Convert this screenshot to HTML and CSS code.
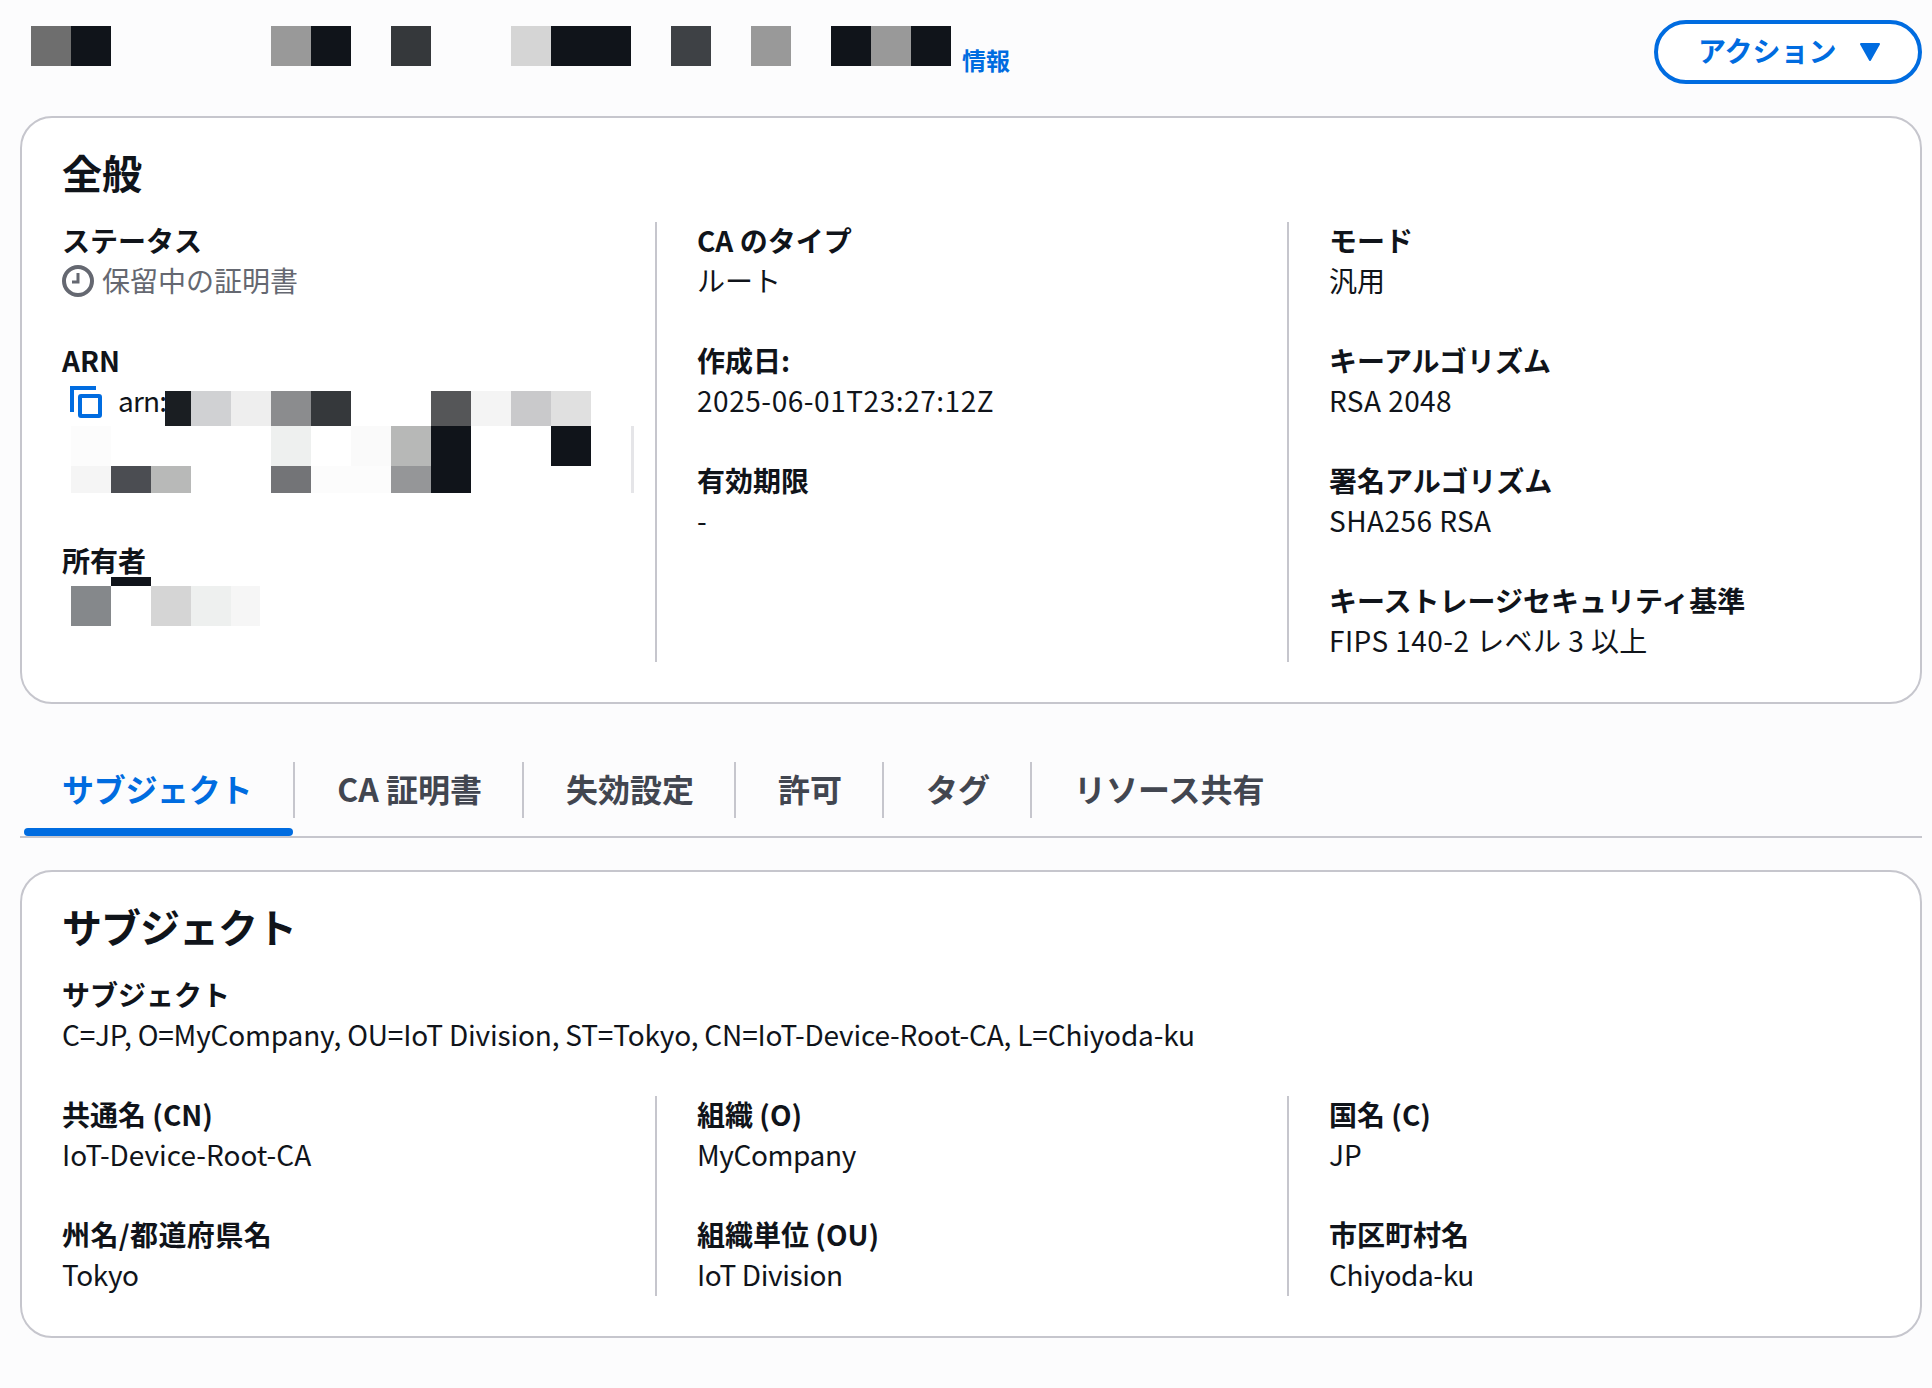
FILE: index.html
```html
<!DOCTYPE html>
<html lang="ja">
<head>
<meta charset="utf-8">
<title>CA 詳細</title>
<link rel="stylesheet" href="styles.css">
</head>
<body>
<header class="page-head">
  <div class="title-wrap">
    <div class="cells title-cells">
      <i class="cell s-6e"></i><i class="cell s-10"></i><i class="cell"></i><i class="cell"></i><i class="cell"></i><i class="cell"></i>
      <i class="cell s-99"></i><i class="cell s-10"></i><i class="cell"></i><i class="cell s-35"></i><i class="cell"></i><i class="cell"></i>
      <i class="cell s-d5"></i><i class="cell s-10"></i><i class="cell s-10"></i><i class="cell"></i><i class="cell s-3e"></i><i class="cell"></i>
      <i class="cell s-99"></i><i class="cell"></i><i class="cell s-10"></i><i class="cell s-99"></i><i class="cell s-10"></i>
    </div>
    <a class="info" href="#">情報</a>
  </div>
  <button class="action" type="button"><span>アクション</span>
    <svg class="caret" width="20" height="18" viewBox="0 0 20 18"><path d="M1 1h18L10 17z" fill="#006ce0" stroke="#006ce0" stroke-width="2" stroke-linejoin="round"/></svg>
  </button>
</header>

<section class="card general">
  <h2>全般</h2>
  <div class="cols">
    <div class="col">
      <div class="item">
        <div class="label">ステータス</div>
        <div class="value status">
          <svg class="status-icon" width="32" height="32" viewBox="0 0 32 32"><circle cx="16" cy="16" r="14" fill="none" stroke="#656871" stroke-width="4"/><path d="M16 8v9h-6" fill="none" stroke="#656871" stroke-width="3"/></svg>
          保留中の証明書
        </div>
      </div>
      <div class="item">
        <div class="label">ARN</div>
        <div class="value arn">
          <svg class="copy-icon" width="32" height="32" viewBox="0 0 32 32"><path d="M2 26V2h24" fill="none" stroke="#006ce0" stroke-width="4"/><rect x="10" y="10" width="20" height="20" rx="1" fill="none" stroke="#006ce0" stroke-width="4"/></svg>
          <span class="arn-text">arn:</span>
          <div class="arn-mask">
            <div class="cells r1">
              <i class="gap-94"></i><i class="cell narrow s-1a"></i><i class="cell s-d0"></i><i class="cell s-ee"></i><i class="cell s-8b"></i><i class="cell s-35"></i><i class="cell s-w"></i><i class="cell s-w"></i><i class="cell s-55"></i><i class="cell s-f4"></i><i class="cell s-c9"></i><i class="cell s-e0"></i>
            </div>
            <div class="cells r2">
              <i class="cell s-fc"></i><i class="cell s-w"></i><i class="cell s-w"></i><i class="cell s-w"></i><i class="cell s-w"></i><i class="cell s-ef"></i><i class="cell s-w"></i><i class="cell s-fa"></i><i class="cell s-b7"></i><i class="cell s-10"></i><i class="cell s-w"></i><i class="cell s-w"></i><i class="cell s-10"></i><i class="cell s-w"></i><i class="edge"></i>
            </div>
            <div class="cells r3">
              <i class="cell s-f5"></i><i class="cell s-4b"></i><i class="cell s-b8"></i><i class="cell s-w"></i><i class="cell s-w"></i><i class="cell s-73"></i><i class="cell s-fc"></i><i class="cell s-fc"></i><i class="cell s-95"></i><i class="cell s-10"></i><i class="cell s-w"></i><i class="cell s-w"></i><i class="cell s-w"></i><i class="cell s-w"></i><i class="edge"></i>
            </div>
          </div>
        </div>
      </div>
      <div class="item owner">
        <div class="label">所有者</div>
        <div class="value">&nbsp;
          <div class="owner-mask">
            <i class="owner-bar"></i>
            <div class="cells r-owner">
              <i class="cell s-85"></i><i class="cell s-w"></i><i class="cell s-d5"></i><i class="cell s-ef"></i><i class="cell short s-f6"></i>
            </div>
          </div>
        </div>
      </div>
    </div>
    <div class="col ruled">
      <div class="item"><div class="label">CA のタイプ</div><div class="value">ルート</div></div>
      <div class="item"><div class="label">作成日:</div><div class="value num-wide">2025-06-01T23:27:12Z</div></div>
      <div class="item"><div class="label">有効期限</div><div class="value">-</div></div>
    </div>
    <div class="col ruled">
      <div class="item"><div class="label">モード</div><div class="value">汎用</div></div>
      <div class="item"><div class="label">キーアルゴリズム</div><div class="value num">RSA 2048</div></div>
      <div class="item"><div class="label">署名アルゴリズム</div><div class="value num">SHA256 RSA</div></div>
      <div class="item"><div class="label">キーストレージセキュリティ基準</div><div class="value num">FIPS 140-2 レベル 3 以上</div></div>
    </div>
  </div>
</section>

<nav class="tabs">
  <a class="tab active" href="#">サブジェクト</a>
  <a class="tab" href="#">CA 証明書</a>
  <a class="tab" href="#">失効設定</a>
  <a class="tab" href="#">許可</a>
  <a class="tab" href="#">タグ</a>
  <a class="tab" href="#">リソース共有</a>
</nav>

<section class="card subject">
  <h2 class="tight">サブジェクト</h2>
  <div class="item full">
    <div class="label">サブジェクト</div>
    <div class="value long">C=JP, O=MyCompany, OU=IoT Division, ST=Tokyo, CN=IoT-Device-Root-CA, L=Chiyoda-ku</div>
  </div>
  <div class="cols">
    <div class="col">
      <div class="item"><div class="label">共通名 (CN)</div><div class="value">IoT-Device-Root-CA</div></div>
      <div class="item"><div class="label wide">州名/都道府県名</div><div class="value lower">Tokyo</div></div>
    </div>
    <div class="col ruled">
      <div class="item"><div class="label">組織 (O)</div><div class="value lower">MyCompany</div></div>
      <div class="item"><div class="label">組織単位 (OU)</div><div class="value lower">IoT Division</div></div>
    </div>
    <div class="col ruled">
      <div class="item"><div class="label">国名 (C)</div><div class="value">JP</div></div>
      <div class="item"><div class="label">市区町村名</div><div class="value lower">Chiyoda-ku</div></div>
    </div>
  </div>
</section>
</body>
</html>
```
FILE: styles.css
```css
* { box-sizing: border-box; }
html, body { margin: 0; background: #fcfcfd; }
body {
  padding: 20px 10px 0 20px;
  font-family: "Noto Sans CJK JP", "Noto Sans", sans-serif;
  font-size: 28px;
  line-height: 40px;
  color: #10141a;
}
i { display: block; }

.page-head { display: flex; justify-content: space-between; align-items: flex-start; height: 96px; }
.title-wrap { display: flex; align-items: flex-end; padding: 6px 0 0 11px; }
.cells { display: flex; }
.cell { width: 40px; height: 100%; flex: none; }
.title-cells { height: 40px; }
.info { font-size: 24px; line-height: 34px; color: #006ce0; text-decoration: none; font-weight: 600; margin: 0 0 -11px 11px; }
.action {
  display: flex; align-items: center; justify-content: space-between;
  width: 268px; height: 64px; padding: 0 38px 4px 40px;
  border: 4px solid #006ce0; border-radius: 40px; background: #fff;
  color: #006ce0; font: 700 28px/40px "Noto Sans CJK JP", "Noto Sans", sans-serif;
  white-space: nowrap;
}
.caret { flex: none; margin-top: 3px; }

.card { background: #fff; border: 2px solid #c6c6cd; border-radius: 32px; padding: 32px 40px 40px; }
.general { height: 588px; }
.subject { height: 468px; margin-top: 32px; }
h2 { margin: -2px 0 24px; font-size: 40px; line-height: 48px; font-weight: 700; }
.tight { letter-spacing: -1px; }

.cols { display: grid; grid-template-columns: 593px 632px 1fr; }
.col { display: flex; flex-direction: column; gap: 40px; }
.ruled { position: relative; padding-left: 42px; }
.ruled::before { content: ""; position: absolute; left: 0; top: 2px; bottom: -2px; width: 2px; background: #c6c6cd; }
.label { font-weight: 700; }
.wide { letter-spacing: 0.4px; }
.full { margin-bottom: 40px; }
.num { letter-spacing: 0.45px; }
.num-wide { letter-spacing: 0.55px; }
.lower { letter-spacing: -0.4px; }
.long { letter-spacing: -0.17px; }

.status { display: flex; align-items: center; gap: 8px; color: #656871; }
.status-icon { flex: none; margin-top: 2px; }

.arn { position: relative; display: flex; align-items: center; padding-left: 8px; gap: 16px; width: 100%; height: 40px; margin-bottom: 80px; }
.arn-text { letter-spacing: -0.8px; }
.copy-icon { flex: none; margin-top: 4px; }
.arn-mask { position: absolute; left: 9px; top: 11px; width: 563px; }
.r1 { height: 35px; }
.r2 { height: 40px; background: #fff; }
.r3 { height: 27px; background: #fff; }
.gap-94 { width: 94px; flex: none; }
.narrow { width: 26px; }
.edge { width: 3px; background: #e5e5e8; flex: none; }

.owner .value { position: relative; }
.owner-mask { position: absolute; left: 9px; top: -3px; }
.owner-bar { width: 40px; height: 9px; margin-left: 40px; background: #10141a; }
.r-owner { height: 40px; }
.short { width: 29px; }

.tabs { display: flex; height: 134px; padding: 58px 0 0 2px; position: relative; }
.tabs::after { content: ""; position: absolute; left: 0; right: 0; top: 132px; height: 2px; background: #c6c6cd; }
.tab { position: relative; height: 56px; padding: 0 40px 0 42px; font-size: 32px; line-height: 52px; font-weight: 700; color: #424650; text-decoration: none; white-space: nowrap; border-right: 2px solid #c6c6cd; }
.tab:first-child { padding-left: 40px; padding-right: 41px; letter-spacing: -0.3px; }
.tab:last-child { border-right: 0; }
.tab.active { color: #006ce0; }
.tab.active::after { content: ""; position: absolute; left: 2px; right: 0; top: 66px; height: 8px; border-radius: 4px; background: #006ce0; }

.s-w { background: #fff; }
.s-10 { background: #10141a; }
.s-1a { background: #1a1e22; }
.s-35 { background: #35383b; }
.s-3e { background: #3e4145; }
.s-4b { background: #4b4d52; }
.s-55 { background: #555658; }
.s-6e { background: #6e6e6e; }
.s-73 { background: #737477; }
.s-85 { background: #85888b; }
.s-8b { background: #8b8c8e; }
.s-95 { background: #959698; }
.s-99 { background: #999999; }
.s-b7 { background: #b7b8b7; }
.s-b8 { background: #b8b9b8; }
.s-c9 { background: #c9c9cb; }
.s-d0 { background: #d0d1d3; }
.s-d5 { background: #d5d5d5; }
.s-e0 { background: #e0e0e0; }
.s-ee { background: #eeeeee; }
.s-ef { background: #eef0ef; }
.s-f4 { background: #f4f4f4; }
.s-f5 { background: #f5f5f5; }
.s-f6 { background: #f6f6f6; }
.s-fa { background: #fafafa; }
.s-fc { background: #fcfcfc; }
```
